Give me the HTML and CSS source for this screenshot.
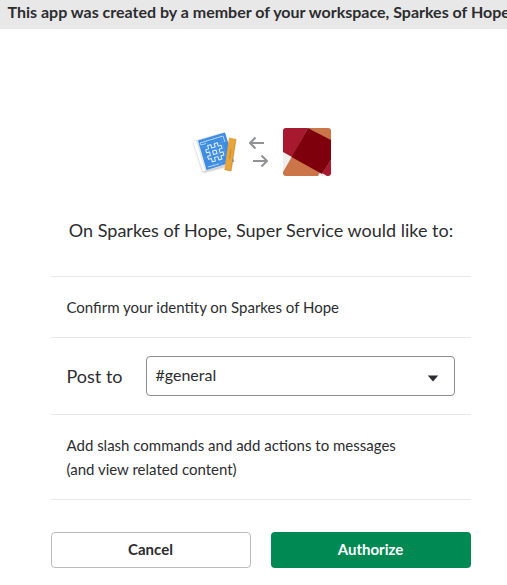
FILE: index.html
```html
<!DOCTYPE html>
<html lang="en">
<head>
<meta charset="utf-8">
<title>Authorize Super Service</title>
<link rel="stylesheet" href="styles.css">
</head>
<body>
<header class="banner">This app was created by a member of your workspace, Sparkes of Hope</header>
<main class="card">
  <div class="logos">
    <svg class="app-icon" viewBox="0 0 48 48" aria-hidden="true">
      <path class="icon-shadow" d="M1.5 13 32 4.500 40 36 11 43.500z"/>
      <path fill="#e6e6e6" d="M1 13.500 6 12 15 42 11 43.500z"/>
      <path fill="#fff" d="M1 13.500 4 12.500 13 42.500 11 43.500z"/>
      <path fill="#3d8ce2" d="M6 12.500 33 4.500 42 33.500 14.500 42z"/>
      <path fill="none" stroke="#5b9ce5" stroke-width=".7" d="M9 20 35 12.500M12 30 37 22.500M15 39 39 31.500M14 11 22 39M21 9 30 37M28 7 36 34"/>
      <path fill="none" stroke="#b4d5f8" stroke-width="1" d="M8 15 31 8 33 14M8 15 9 17 14 15.500M16 39 27 36"/>
      <g transform="translate(22.800 24.300) rotate(-16)" fill="none" stroke="#e4f0ff" stroke-width="1" stroke-linejoin="round">
        <path d="M-5-8.500h3.200v3.500h3.600v-3.500H5V-5h3v3.200h-3v3.600h3V5H5v3.500H1.800V5h-3.600v3.500H-5V5h-3V1.800h3v-3.600h-3V-5h3zM-1.800-1.800v3.600h3.600v-3.600z"/>
      </g>
      <path fill="#e7a53a" d="M37 9.500 44 11 39 43 32.500 41.500z"/>
      <path fill="none" stroke="#bc7725" stroke-width=".6" d="M44 11 39 43 32.500 41.500M39 21 37.500 31"/>
    </svg>
    <svg class="arrows" viewBox="0 0 20 34" aria-hidden="true">
      <path d="M15 8H1.500M6.500 2.500 1 8l5.500 5.500M4 26h14M12.500 20.500l5.500 5.500-5.500 5.500"/>
    </svg>
    <svg class="workspace-icon" viewBox="0 0 48 48" aria-hidden="true">
      <path fill="#eee" d="M0 0h48v48H0z"/>
      <path fill="#a6192e" d="M0 0h25L9 29 0 24z"/>
      <path fill="#cc7549" d="M25 0h23v12.500z"/>
      <path fill="#cc7549" d="M9 28.500 37 44 35 48H0V44z"/>
      <path fill="#7d000c" d="M25 0 48 12v20L39 46 8.500 29z"/>
      <path fill="#a6192e" d="M48 32v16h-4l-5-3z"/>
    </svg>
  </div>
  <h1 class="title">On Sparkes of Hope, Super Service would like to:</h1>
  <section class="scope identity">Confirm your identity on Sparkes of Hope</section>
  <section class="scope channel">
    <span class="channel-label">Post to</span>
    <div class="select" role="combobox" aria-label="Post to" tabindex="0">
      <span class="select-value">#general</span>
      <svg class="caret" viewBox="0 0 12 7" aria-hidden="true"><path d="M.8.500h10.400L6 6.500z"/></svg>
    </div>
  </section>
  <section class="scope commands">Add slash commands and add actions to messages<br>(and view related content)</section>
  <div class="actions">
    <button class="button cancel">Cancel</button>
    <button class="button authorize">Authorize</button>
  </div>
</main>
</body>
</html>
```
FILE: styles.css
```css
* { box-sizing: border-box; }
body {
  margin: 0;
  overflow: hidden;
  background: #fff;
  color: #2c2d30;
  font-family: Lato, sans-serif;
  font-size: 15px;
  line-height: 24px;
}
.banner {
  height: 29px;
  padding-left: 7.5px;
  background: #e8e8e8;
  font-weight: 700;
  font-size: 16px;
  line-height: 23px;
  white-space: nowrap;
}
.card { width: 420px; margin-left: 51px; }
.logos {
  display: flex;
  height: 147px;
  padding: 99px 0 0 141px;
}
.app-icon, .workspace-icon { width: 48px; height: 48px; }
.icon-shadow {
  fill: #ddd;
  filter: drop-shadow(0 1px 1px rgba(0, 0, 0, .3));
}
.arrows {
  width: 20px;
  height: 34px;
  margin: 7px 14px 0 9px;
  fill: none;
  stroke: #919295;
  stroke-width: 2;
}
.workspace-icon { border-radius: 3px; }
.title {
  height: 100px;
  margin: 0;
  padding: 42px 0 0;
  font-size: 18px;
  font-weight: 400;
  line-height: 24px;
  text-align: center;
  white-space: nowrap;
}
.scope { border-top: 1px solid #e8e8e8; padding: 18px 15.5px 0; }
.identity { height: 61px; }
.channel {
  display: flex;
  height: 77px;
}
.channel-label { width: 79.5px; font-size: 18px; line-height: 40px; }
.select {
  display: flex;
  align-items: center;
  justify-content: space-between;
  width: 309px;
  height: 40px;
  padding: 0 15.5px 0 8.5px;
  border: 1px solid #8d8d8f;
  border-radius: 4px;
}
.select-value { font-size: 16px; line-height: 24px; margin-bottom: 2px; }
.caret { width: 12px; height: 7px; margin-top: 4px; fill: #2c2d30; }
.commands { height: 85px; }
.actions {
  display: flex;
  gap: 20px;
  padding-top: 32px;
  border-top: 1px solid #e8e8e8;
}
.button {
  width: 200px;
  height: 36px;
  padding: 0 1px 2px 0;
  border: 0;
  border-radius: 4px;
  font: 700 15px/34px Lato, sans-serif;
}
.cancel {
  border: 1px solid #bcbcbc;
  background: #fff;
  color: #2c2d30;
  line-height: 32px;
}
.authorize { background: #008952; color: #fff; }
```
